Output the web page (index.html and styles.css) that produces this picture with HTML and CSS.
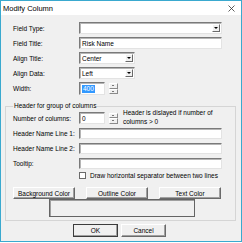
FILE: index.html
```html
<!DOCTYPE html>
<html>
<head>
<meta charset="utf-8">
<title>Modify Column</title>
<link rel="stylesheet" href="styles.css">
</head>
<body>
<div class="dialog">
  <div class="titlebar">
    <span class="title">Modify Column</span>
    <svg class="close" width="7" height="7" viewBox="0 0 7 7"><path d="M0.5 0.5L6.5 6.5M6.5 0.5L0.5 6.5" stroke="#333" stroke-width="0.8"/></svg>
  </div>
  <div class="body">
    <div class="row">
      <span class="lbl">Field Type:</span>
      <div class="combo wide"><span class="val"></span><span class="drop"></span></div>
    </div>
    <div class="row">
      <span class="lbl">Field Title:</span>
      <div class="edit wide">Risk Name</div>
    </div>
    <div class="row">
      <span class="lbl">Align Title:</span>
      <div class="combo small"><span class="val">Center</span><span class="drop"></span></div>
    </div>
    <div class="row">
      <span class="lbl">Align Data:</span>
      <div class="combo small"><span class="val">Left</span><span class="drop"></span></div>
    </div>
    <div class="row tall">
      <span class="lbl">Width:</span>
      <div class="edit num"><span class="sel">400</span></div>
      <div class="spin"><span class="up"></span><span class="down"></span></div>
    </div>

    <fieldset class="group">
      <legend>Header for group of columns</legend>
      <div class="row">
        <span class="lbl">Number of columns:</span>
        <div class="edit num">0</div>
        <div class="spin"><span class="up"></span><span class="down"></span></div>
        <div class="hint">Header is dislayed if number of<br>columns &gt; 0</div>
      </div>
      <div class="row line">
        <span class="lbl">Header Name Line 1:</span>
        <div class="edit wide"></div>
      </div>
      <div class="row line">
        <span class="lbl">Header Name Line 2:</span>
        <div class="edit wide"></div>
      </div>
      <div class="row line">
        <span class="lbl">Tooltip:</span>
        <div class="edit wide"></div>
      </div>
      <div class="check-row">
        <span class="box"></span>
        <span>Draw horizontal separator between two lines</span>
      </div>
      <div class="color-btns">
        <button class="btn">Background Color</button>
        <button class="btn">Outline Color</button>
        <button class="btn">Text Color</button>
      </div>
      <div class="preview"></div>
    </fieldset>

    <div class="actions">
      <button class="btn default">OK</button>
      <button class="btn">Cancel</button>
    </div>
  </div>
</div>
</body>
</html>
```

FILE: styles.css
```css
html, body { margin:0; padding:0; background:#fff; }
body { font-family:"Liberation Sans", Arial, sans-serif; font-size:6.5px; color:#000; }

.dialog { width:242px; height:242px; box-sizing:border-box; border:1px solid #3aa9cf; background:#f0f0f0; display:flex; flex-direction:column; }
.titlebar { height:14px; background:#fff; display:flex; align-items:center; justify-content:space-between; padding:0 6px 0 2px; }
.title { font-size:7.5px; color:#000; }
.close { display:block; }

.body { padding:7px 0 0 0; display:flex; flex-direction:column; }

.row { display:flex; align-items:center; height:12px; margin:0 0 3px 12px; }
.row.tall { height:13px; }
.lbl { width:66px; flex:none; }

.edit, .combo { box-sizing:border-box; height:100%; background:#fff; border:1px solid; border-color:#7a7a7a #e3e3e3 #e3e3e3 #7a7a7a; box-shadow:inset 1px 1px 0 #b5b5b5; display:flex; align-items:center; padding-left:2px; }
.wide { width:143px; }
.small { width:56px; }
.num { width:26px; }
.combo { justify-content:space-between; padding-right:1px; }
.drop { width:8px; height:8px; box-sizing:border-box; background:#f0f0f0; border:1px solid; border-color:#fff #6a6a6a #6a6a6a #fff; position:relative; }
.drop::after { content:""; position:absolute; left:1px; top:2px; border-left:2px solid transparent; border-right:2px solid transparent; border-top:2px solid #000; }
.sel { background:#3399ff; color:#fff; padding:0 1px; line-height:8px; }

.spin { width:9px; height:11px; margin-left:4px; display:flex; flex-direction:column; }
.spin span { flex:1; box-sizing:border-box; background:#f0f0f0; border:1px solid; border-color:#fff #8a8a8a #8a8a8a #fff; position:relative; }
.spin .up::after { content:""; position:absolute; left:2px; top:1px; border-left:1.5px solid transparent; border-right:1.5px solid transparent; border-bottom:1.5px solid #000; }
.spin .down::after { content:""; position:absolute; left:2px; top:1px; border-left:1.5px solid transparent; border-right:1.5px solid transparent; border-top:1.5px solid #000; }

.group { margin:4px 5px 0 4px; padding:2px 0 3px 7px; border:1px solid #d5d5d5; min-width:0; }
.group legend { padding:0 1px; margin-left:0; line-height:8px; }
.group .row { margin:0; }
.group .row.line { height:11px; margin-top:4px; }
.hint { margin-left:5px; line-height:9px; margin-top:-2px; }

.check-row { display:flex; align-items:center; height:7px; margin:3px 0 0 66px; }
.box { width:7px; height:7px; box-sizing:border-box; background:#fff; border:1px solid #6a6a6a; margin-right:4px; }

.color-btns { display:flex; gap:11px; margin-top:8px; }
.btn { font-family:inherit; font-size:6.5px; color:#000; height:12px; padding:0; background:#f0f0f0; box-sizing:border-box; border:1px solid; border-color:#fff #6a6a6a #6a6a6a #fff; box-shadow:inset -1px -1px 0 #a0a0a0; }
.color-btns .btn { width:62px; }
.preview { width:146px; height:18px; box-sizing:border-box; margin-left:36px; border:1px solid #646464; box-shadow:inset 1px 1px 0 #a0a0a0; }

.actions { display:flex; gap:3px; margin:3px 0 0 72px; }
.actions .btn { width:45px; height:13px; }
.btn.default { border-color:#3c3c3c; }
```
